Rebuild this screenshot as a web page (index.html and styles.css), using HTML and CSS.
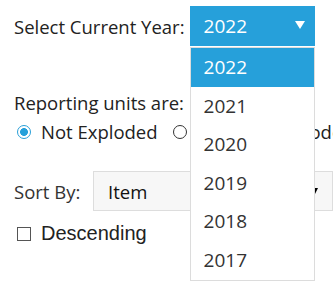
FILE: index.html
```html
<!DOCTYPE html>
<html lang="en">
<head>
  <meta charset="UTF-8" />
  <title>Report options</title>
  <link rel="stylesheet" href="styles.css">
</head>
<body>
  <div class="page">
    <div class="year-row">
      <span class="label">Select Current Year:</span>
      <div class="year-select">
        <div class="year-value">
          <span>2022</span>
          <svg class="caret" width="10" height="8" viewBox="0 0 10 8"><path d="M0 0H10L5 8Z" fill="#fff"/></svg>
        </div>
        <ul class="year-list">
          <li class="selected">2022</li>
          <li>2021</li>
          <li>2020</li>
          <li>2019</li>
          <li>2018</li>
          <li>2017</li>
        </ul>
      </div>
    </div>

    <div class="units">
      <div class="label">Reporting units are:</div>
      <div class="radios">
        <span class="radio checked"></span>
        <span class="radio-text">Not Exploded</span>
        <span class="radio"></span>
        <span class="radio-text">Partially Exploded</span>
      </div>
    </div>

    <div class="sort-row">
      <span class="label">Sort By:</span>
      <div class="sort-select">
        <span>Item</span>
        <svg width="7" height="7" viewBox="0 0 7 7"><path d="M0 0H7L3.5 7Z" fill="#000"/></svg>
      </div>
    </div>

    <div class="check-row">
      <span class="checkbox"></span>
      <span class="check-text">Descending</span>
    </div>
  </div>
</body>
</html>
```

FILE: styles.css
```css
* {
  box-sizing: border-box;
}

body {
  margin: 0;
  background: #ffffff;
  color: #222;
  font-family: "Open Sans", "Noto Sans", sans-serif;
  font-size: 18.5px;
}

.page {
  width: 333px;
  height: 290px;
  padding: 6px 0 0 14px;
  overflow: hidden;
}

.year-row {
  display: flex;
  align-items: center;
  gap: 5px;
}

.year-select {
  position: relative;
  width: 125px;
}

.year-value {
  display: flex;
  align-items: center;
  justify-content: space-between;
  height: 40px;
  padding: 0 10px 0 14px;
  background-color: #26a0da;
  color: #ffffff;
  font-size: 19px;
}

.caret {
  margin-top: -2px;
}

.year-list {
  position: absolute;
  top: 41px;
  left: 0;
  width: 125px;
  margin: 0;
  padding: 0;
  list-style: none;
  background: #ffffff;
  border: 1px solid #dcdcdc;
  z-index: 2;
}

.year-list li {
  height: 38.6px;
  line-height: 38.6px;
  padding-left: 13px;
  font-size: 19px;
  color: #333;
}

.year-list li.selected {
  background-color: #26a0da;
  color: #ffffff;
}

.units {
  margin-top: 43px;
  line-height: 27px;
}

.radios {
  display: flex;
  align-items: center;
  white-space: nowrap;
  margin-top: 2px;
  padding-left: 3px;
  overflow: hidden;
}

.radio {
  flex: none;
  width: 14px;
  height: 14px;
  border: 1px solid #333;
  border-radius: 50%;
  background: #fff;
}

.radio.checked {
  border: 1.5px solid #2a9fd8;
  background: radial-gradient(circle, #26a0da 0 3.6px, #ffffff 4.2px);
}

.radio-text {
  margin: 0 15px 0 10px;
}

.radio-text:last-child {
  margin-left: 13px;
}

.sort-row {
  display: flex;
  align-items: center;
  margin-top: 26px;
  gap: 12px;
}

.sort-row .label {
  color: #333;
  width: 67px;
}

.sort-select {
  flex: 1;
  display: flex;
  align-items: center;
  justify-content: space-between;
  height: 40px;
  padding: 0 14px 0 14px;
  background-color: #f7f7f7;
  border: 1px solid #dddddd;
  color: #111;
}

.check-row {
  display: flex;
  align-items: center;
  margin-top: 9px;
  padding-left: 3px;
  line-height: 27px;
}

.checkbox {
  width: 14px;
  height: 14px;
  border: 1px solid #555;
  background: #fff;
}

.check-text {
  margin-left: 10px;
  font-family: "Liberation Sans", Arial, sans-serif;
  font-size: 20px;
  color: #222;
}
```
